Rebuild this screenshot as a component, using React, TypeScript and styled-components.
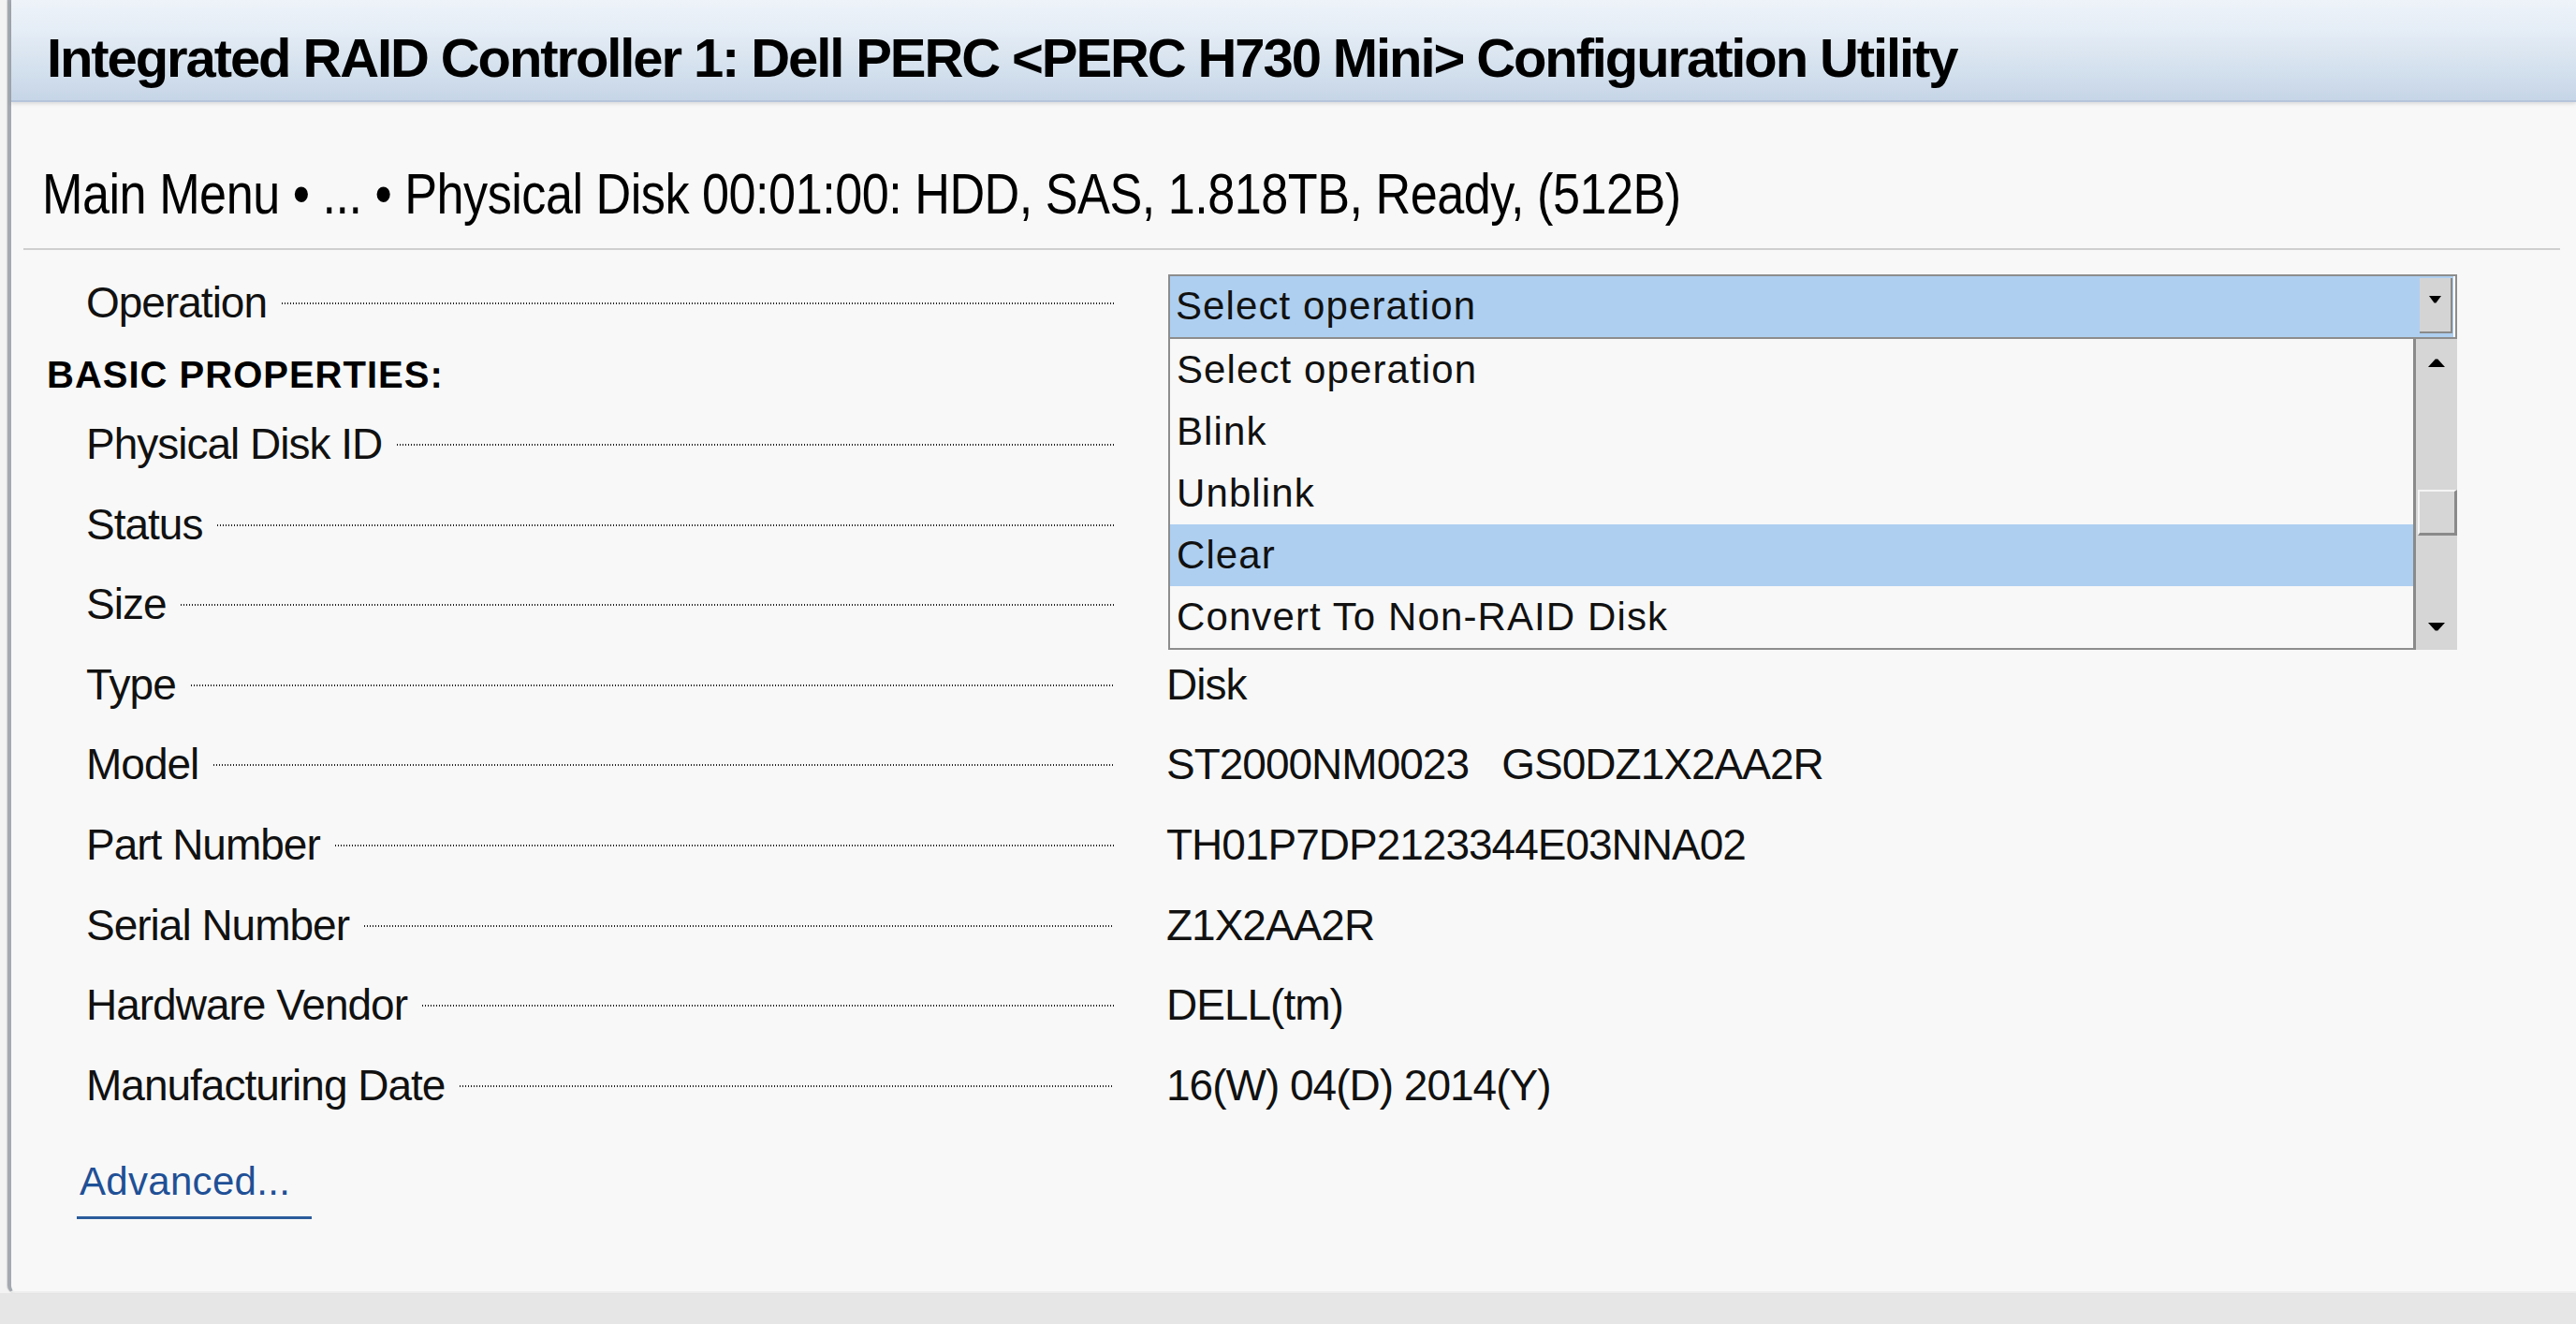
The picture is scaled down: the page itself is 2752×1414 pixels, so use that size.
import React from 'react';
import styled, { createGlobalStyle } from 'styled-components';

const GlobalStyle = createGlobalStyle`
  html, body { margin: 0; padding: 0; background: #e6e6e6; }
  body {
    width: 2752px;
    height: 1414px;
    overflow: hidden;
    font-family: "Liberation Sans", Arial, sans-serif;
  }
`;

const Screen = styled.div`
  height: 1414px;
  display: flex;
  flex-direction: column;
  background: #e6e6e6;
`;

const Stage = styled.div`
  height: 1381px;
  flex: none;
  display: flex;
  padding-left: 8px;
  background: #f3f3f3;
`;

const Panel = styled.div`
  flex: 1;
  display: flex;
  flex-direction: column;
  background: #f8f8f8;
  border-left: 4px solid #a4a9b1;
  border-bottom: 2px solid #eeeeee;
  border-bottom-left-radius: 8px;
  box-shadow: -1px 0 1px rgba(0, 0, 0, 0.12);
`;

const Header = styled.header`
  height: 109px;
  box-sizing: border-box;
  padding: 33px 0 0 38px;
  background: linear-gradient(to bottom, #eef3f9 0%, #e5edf6 30%, #d7e3ef 62%, #c6d5e7 100%);
  border-bottom: 2px solid #b6c5da;
  box-shadow: 0 2px 4px rgba(0, 0, 0, 0.12);
`;

const Title = styled.h1`
  margin: 0;
  font: bold 58px/58px "Liberation Sans", Arial, sans-serif;
  letter-spacing: -2.1px;
  color: #000;
  white-space: nowrap;
`;

const Crumbs = styled.div`
  align-self: flex-start;
  margin: 67px 0 0 33px;
  font: 62px/62px "Liberation Sans", Arial, sans-serif;
  letter-spacing: -0.6px;
  color: #000;
  white-space: nowrap;
  transform: scaleX(0.842);
  transform-origin: left center;
`;

const Divider = styled.div`
  margin: 27px 17px 0 13px;
  height: 2px;
  background: #cfcfcf;
`;

const Form = styled.div`
  display: flex;
  flex-direction: column;
  padding: 18px 0 0 38px;
`;

const Row = styled.div<{ $h: number }>`
  display: flex;
  align-items: center;
  height: ${(p) => p.$h}px;
  padding-left: 42px;
  flex: none;
`;

const LabelCell = styled.div`
  display: flex;
  align-items: center;
  width: 1098px;
  flex: none;
`;

const Label = styled.span`
  font: 46px/46px "Liberation Sans", Arial, sans-serif;
  letter-spacing: -1px;
  color: #111;
  white-space: nowrap;
`;

const Leader = styled.span`
  flex: 1;
  height: 2px;
  margin: 2px 0 0 16px;
  background-image: linear-gradient(to right, #222 1px, transparent 1px);
  background-size: 3px 2px;
  background-repeat: repeat-x;
`;

const Value = styled.span`
  margin-left: 56px;
  font: 46px/46px "Liberation Sans", Arial, sans-serif;
  letter-spacing: -1px;
  color: #111;
  white-space: pre;
`;

const Heading = styled.div`
  height: 70.2px;
  box-sizing: border-box;
  padding-top: 8px;
  display: flex;
  align-items: center;
  font: bold 40px/40px "Liberation Sans", Arial, sans-serif;
  letter-spacing: 1px;
  color: #000;
  flex: none;
`;

const SelectWrap = styled.div`
  position: relative;
  align-self: flex-start;
  margin: 8px 0 0 58px;
  width: 1377px;
`;

const SelectBox = styled.div`
  height: 69px;
  box-sizing: border-box;
  display: flex;
  align-items: stretch;
  padding: 2px 3px 4px 6px;
  border: 2px solid #8d8d8d;
  background: #aecff0;
  box-shadow: inset -2px 0 0 #ffffff;
`;

const OptionText = styled.span`
  flex: 1;
  display: flex;
  align-items: center;
  font: 42px/42px "Liberation Sans", Arial, sans-serif;
  letter-spacing: 1.1px;
  color: #111;
  white-space: nowrap;
`;

const ArrowButton = styled.div`
  width: 35px;
  box-sizing: border-box;
  display: flex;
  justify-content: center;
  align-items: flex-start;
  padding-top: 19px;
  background: #d4d4d4;
  border-right: 2px solid #8a8a8a;
  border-bottom: 2px solid #8a8a8a;
`;

const ListPanel = styled.div`
  position: absolute;
  top: 100%;
  left: 0;
  right: 0;
  height: 332px;
  display: flex;
  z-index: 2;
`;

const ListBox = styled.div`
  flex: 1;
  display: flex;
  flex-direction: column;
  background: #f8f8f8;
  border-left: 2px solid #8d8d8d;
  border-right: 3px solid #8a8a8a;
  border-bottom: 2px solid #8d8d8d;
`;

const Option = styled.div<{ $active?: boolean }>`
  height: 66px;
  flex: none;
  display: flex;
  align-items: center;
  padding-left: 7px;
  background: ${(p) => (p.$active ? '#aecff0' : 'transparent')};
  font: 42px/42px "Liberation Sans", Arial, sans-serif;
  letter-spacing: 1.1px;
  color: #111;
  white-space: nowrap;
`;

const Scrollbar = styled.div`
  width: 44px;
  display: flex;
  flex-direction: column;
  background: #d6d6d6;
`;

const ScrollButton = styled.div`
  height: 50px;
  flex: none;
  display: flex;
  align-items: center;
  justify-content: center;
`;

const Track = styled.div`
  flex: 1;
  display: flex;
  flex-direction: column;
`;

const Thumb = styled.div<{ $offset: number }>`
  margin: ${(p) => p.$offset}px 0 0 2px;
  height: 49px;
  box-sizing: border-box;
  background: #d6d6d6;
  border-top: 2px solid #f4f4f4;
  border-left: 2px solid #f4f4f4;
  border-right: 3px solid #8a8a8a;
  border-bottom: 3px solid #8a8a8a;
`;

const AdvancedLink = styled.a`
  align-self: flex-start;
  margin: 35.4px 0 0 32px;
  padding: 0 23px 12px 3px;
  font: 42px/50px "Liberation Sans", Arial, sans-serif;
  letter-spacing: 0.3px;
  color: #1f5096;
  border-bottom: 3px solid #2b5c9c;
  text-decoration: none;
`;

const Triangle: React.FC<{ dir: 'up' | 'down'; w?: number; h?: number }> = ({ dir, w = 14, h = 8 }) => (
  <svg width={w} height={h} viewBox="0 0 14 8" preserveAspectRatio="none" aria-hidden="true">
    {dir === 'down' ? (
      <path d="M0 0 H14 L8 7.5 H6 Z" fill="#000" />
    ) : (
      <path d="M6 0.5 H8 L14 8 H0 Z" fill="#000" />
    )}
  </svg>
);

const operations = ['Select operation', 'Blink', 'Unblink', 'Clear', 'Convert To Non-RAID Disk'];

const properties: { label: string; value: string }[] = [
  { label: 'Physical Disk ID', value: '' },
  { label: 'Status', value: '' },
  { label: 'Size', value: '' },
  { label: 'Type', value: 'Disk' },
  { label: 'Model', value: 'ST2000NM0023   GS0DZ1X2AA2R' },
  { label: 'Part Number', value: 'TH01P7DP2123344E03NNA02' },
  { label: 'Serial Number', value: 'Z1X2AA2R' },
  { label: 'Hardware Vendor', value: 'DELL(tm)' },
  { label: 'Manufacturing Date', value: '16(W) 04(D) 2014(Y)' },
];

export default function App() {
  return (
    <>
      <GlobalStyle />
      <Screen>
        <Stage>
          <Panel>
            <Header>
              <Title>Integrated RAID Controller 1: Dell PERC &lt;PERC H730 Mini&gt; Configuration Utility</Title>
            </Header>
            <Crumbs>Main Menu • ... • Physical Disk 00:01:00: HDD, SAS, 1.818TB, Ready, (512B)</Crumbs>
            <Divider />
            <Form>
              <Row $h={76}>
                <LabelCell>
                  <Label>Operation</Label>
                  <Leader />
                </LabelCell>
                <SelectWrap>
                  <SelectBox>
                    <OptionText>Select operation</OptionText>
                    <ArrowButton>
                      <Triangle dir="down" w={13} h={8} />
                    </ArrowButton>
                  </SelectBox>
                  <ListPanel>
                    <ListBox>
                      {operations.map((op) => (
                        <Option key={op} $active={op === 'Clear'}>
                          {op}
                        </Option>
                      ))}
                    </ListBox>
                    <Scrollbar>
                      <ScrollButton>
                        <Triangle dir="up" w={18} h={9} />
                      </ScrollButton>
                      <Track>
                        <Thumb $offset={111} />
                      </Track>
                      <ScrollButton>
                        <Triangle dir="down" w={18} h={9} />
                      </ScrollButton>
                    </Scrollbar>
                  </ListPanel>
                </SelectWrap>
              </Row>
              <Heading>BASIC PROPERTIES:</Heading>
              {properties.map((p) => (
                <Row $h={85.6} key={p.label}>
                  <LabelCell>
                    <Label>{p.label}</Label>
                    <Leader />
                  </LabelCell>
                  <Value>{p.value}</Value>
                </Row>
              ))}
              <AdvancedLink href="#">Advanced...</AdvancedLink>
            </Form>
          </Panel>
        </Stage>
      </Screen>
    </>
  );
}
